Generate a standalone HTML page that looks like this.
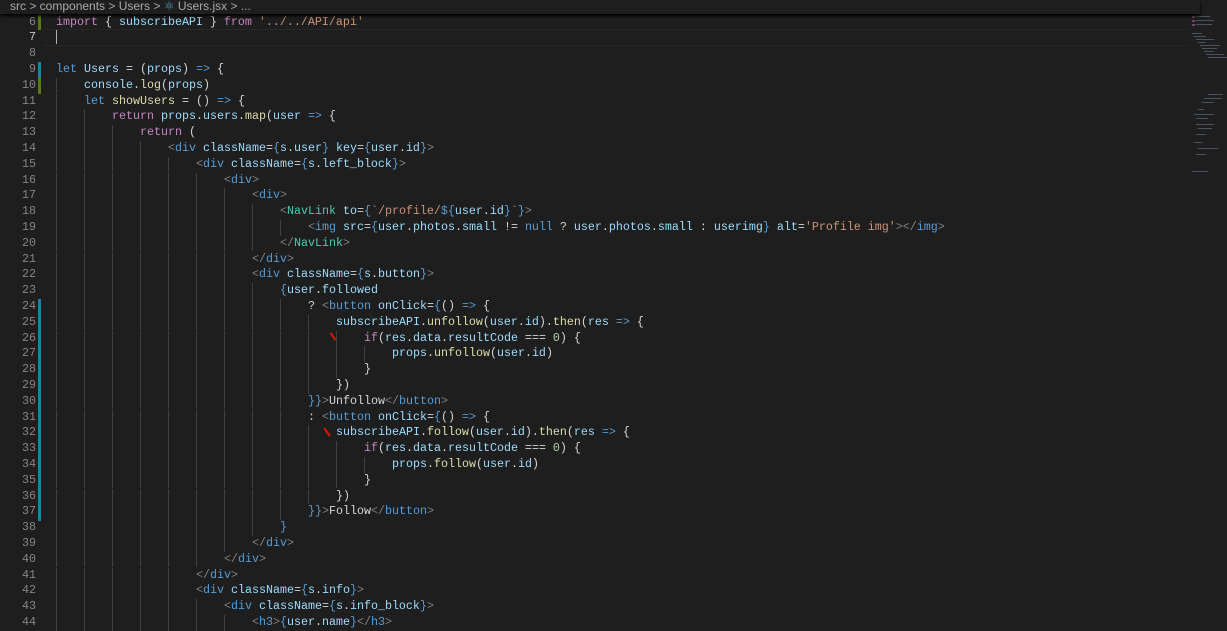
<!DOCTYPE html>
<html><head><meta charset="utf-8"><style>
body{margin:0;background:#1e1e1e;width:1227px;height:627px;overflow:hidden;position:relative;font-family:"Liberation Mono",monospace;}
.bc{position:absolute;left:0;top:0;width:1190px;height:14px;background:#1e1e1e;color:#a9a9a9;font:12px "Liberation Sans",sans-serif;line-height:13px;padding-left:10px;z-index:3;box-shadow:0 2px 3px #000;white-space:pre}
.ln{position:absolute;left:0;width:36px;text-align:right;color:#858585;font-size:11.67px;line-height:15.8px;height:15.8px;margin-top:2.5px}
.cd{position:absolute;left:56px;font-size:11.67px;line-height:15.8px;height:15.8px;white-space:pre;color:#d4d4d4;margin-top:2.5px}
.ind{display:inline-block;height:15.8px;vertical-align:top;background:repeating-linear-gradient(to right,#404040 0 1px,transparent 1px 28px)}
.bar{position:absolute;left:38px;width:3px}
.k{color:#569cd6}.p{color:#c586c0}.v{color:#9cdcfe}.f{color:#dcdcaa}.t{color:#808080}.s{color:#ce9178}.n{color:#b5cea8}.c{color:#4ec9b0}
</style></head><body>
<div class="bc">src &gt; components &gt; Users &gt; <span style="color:#519aba">⚛</span> Users.jsx &gt; ...</div>
<div style="position:absolute;left:44px;top:29px;width:1145px;height:15px;border-top:1px solid #282828;border-bottom:1px solid #282828"></div>
<div style="position:absolute;left:56px;top:30px;width:1px;height:14px;background:#aeafad"></div>
<div class="bar" style="top:14px;height:16px;background:#587c0c"></div>
<div class="bar" style="top:62px;height:16px;background:#1b81a8"></div>
<div class="bar" style="top:78px;height:16px;background:#587c0c"></div>
<div class="bar" style="top:299px;height:222px;background:#1b81a8"></div>
<div style="position:absolute;left:332px;top:332px;width:2px;height:9px;background:#e51400;transform:rotate(-35deg)"></div>
<div style="position:absolute;left:326px;top:427px;width:2px;height:10px;background:#e51400;transform:rotate(-35deg)"></div>

<div class="ln" style="top:12px">6</div><div class="cd" style="top:12px"><span class="p">import</span> { <span class="v">subscribeAPI</span> } <span class="p">from</span> <span class="s">'../../API/api'</span></div>
<div class="ln" style="top:27.8px;color:#c6c6c6">7</div>
<div class="ln" style="top:43.6px">8</div>
<div class="ln" style="top:59.4px">9</div><div class="cd" style="top:59.4px"><span class="k">let</span> <span class="v">Users</span> = (<span class="v">props</span>) <span class="k">=&gt;</span> {</div>
<div class="ln" style="top:75.2px">10</div><div class="cd" style="top:75.2px"><span class="ind" style="width:28px"></span><span class="v">console</span>.<span class="f">log</span>(<span class="v">props</span>)</div>
<div class="ln" style="top:91px">11</div><div class="cd" style="top:91px"><span class="ind" style="width:28px"></span><span class="k">let</span> <span class="f">showUsers</span> = () <span class="k">=&gt;</span> {</div>
<div class="ln" style="top:106.8px">12</div><div class="cd" style="top:106.8px"><span class="ind" style="width:56px"></span><span class="p">return</span> <span class="v">props</span>.<span class="v">users</span>.<span class="f">map</span>(<span class="v">user</span> <span class="k">=&gt;</span> {</div>
<div class="ln" style="top:122.6px">13</div><div class="cd" style="top:122.6px"><span class="ind" style="width:84px"></span><span class="p">return</span> (</div>
<div class="ln" style="top:138.4px">14</div><div class="cd" style="top:138.4px"><span class="ind" style="width:112px"></span><span class="t">&lt;</span><span class="k">div</span> <span class="v">className</span>=<span class="k">{</span><span class="v">s</span>.<span class="v">user</span><span class="k">}</span> <span class="v">key</span>=<span class="k">{</span><span class="v">user</span>.<span class="v">id</span><span class="k">}</span><span class="t">&gt;</span></div>
<div class="ln" style="top:154.2px">15</div><div class="cd" style="top:154.2px"><span class="ind" style="width:140px"></span><span class="t">&lt;</span><span class="k">div</span> <span class="v">className</span>=<span class="k">{</span><span class="v">s</span>.<span class="v">left_block</span><span class="k">}</span><span class="t">&gt;</span></div>
<div class="ln" style="top:170px">16</div><div class="cd" style="top:170px"><span class="ind" style="width:168px"></span><span class="t">&lt;</span><span class="k">div</span><span class="t">&gt;</span></div>
<div class="ln" style="top:185.8px">17</div><div class="cd" style="top:185.8px"><span class="ind" style="width:196px"></span><span class="t">&lt;</span><span class="k">div</span><span class="t">&gt;</span></div>
<div class="ln" style="top:201.6px">18</div><div class="cd" style="top:201.6px"><span class="ind" style="width:224px"></span><span class="t">&lt;</span><span class="c">NavLink</span> <span class="v">to</span>=<span class="k">{</span><span class="s">`/profile/</span><span class="k">${</span><span class="v">user</span>.<span class="v">id</span><span class="k">}</span><span class="s">`</span><span class="k">}</span><span class="t">&gt;</span></div>
<div class="ln" style="top:217.4px">19</div><div class="cd" style="top:217.4px"><span class="ind" style="width:252px"></span><span class="t">&lt;</span><span class="k">img</span> <span class="v">src</span>=<span class="k">{</span><span class="v">user</span>.<span class="v">photos</span>.<span class="v">small</span> != <span class="k">null</span> ? <span class="v">user</span>.<span class="v">photos</span>.<span class="v">small</span> : <span class="v">userimg</span><span class="k">}</span> <span class="v">alt</span>=<span class="s">'Profile img'</span><span class="t">&gt;&lt;/</span><span class="k">img</span><span class="t">&gt;</span></div>
<div class="ln" style="top:233.2px">20</div><div class="cd" style="top:233.2px"><span class="ind" style="width:224px"></span><span class="t">&lt;/</span><span class="c">NavLink</span><span class="t">&gt;</span></div>
<div class="ln" style="top:249px">21</div><div class="cd" style="top:249px"><span class="ind" style="width:196px"></span><span class="t">&lt;/</span><span class="k">div</span><span class="t">&gt;</span></div>
<div class="ln" style="top:264.8px">22</div><div class="cd" style="top:264.8px"><span class="ind" style="width:196px"></span><span class="t">&lt;</span><span class="k">div</span> <span class="v">className</span>=<span class="k">{</span><span class="v">s</span>.<span class="v">button</span><span class="k">}</span><span class="t">&gt;</span></div>
<div class="ln" style="top:280.6px">23</div><div class="cd" style="top:280.6px"><span class="ind" style="width:224px"></span><span class="k">{</span><span class="v">user</span>.<span class="v">followed</span></div>
<div class="ln" style="top:296.4px">24</div><div class="cd" style="top:296.4px"><span class="ind" style="width:252px"></span>? <span class="t">&lt;</span><span class="k">button</span> <span class="v">onClick</span>=<span class="k">{</span>() <span class="k">=&gt;</span> {</div>
<div class="ln" style="top:312.2px">25</div><div class="cd" style="top:312.2px"><span class="ind" style="width:280px"></span><span class="v">subscribeAPI</span>.<span class="f">unfollow</span>(<span class="v">user</span>.<span class="v">id</span>).<span class="f">then</span>(<span class="v">res</span> <span class="k">=&gt;</span> {</div>
<div class="ln" style="top:328px">26</div><div class="cd" style="top:328px"><span class="ind" style="width:308px"></span><span class="p">if</span>(<span class="v">res</span>.<span class="v">data</span>.<span class="v">resultCode</span> === <span class="n">0</span>) {</div>
<div class="ln" style="top:343.8px">27</div><div class="cd" style="top:343.8px"><span class="ind" style="width:336px"></span><span class="v">props</span>.<span class="f">unfollow</span>(<span class="v">user</span>.<span class="v">id</span>)</div>
<div class="ln" style="top:359.6px">28</div><div class="cd" style="top:359.6px"><span class="ind" style="width:308px"></span>}</div>
<div class="ln" style="top:375.4px">29</div><div class="cd" style="top:375.4px"><span class="ind" style="width:280px"></span>})</div>
<div class="ln" style="top:391.2px">30</div><div class="cd" style="top:391.2px"><span class="ind" style="width:252px"></span><span class="k">}}</span><span class="t">&gt;</span>Unfollow<span class="t">&lt;/</span><span class="k">button</span><span class="t">&gt;</span></div>
<div class="ln" style="top:407px">31</div><div class="cd" style="top:407px"><span class="ind" style="width:252px"></span>: <span class="t">&lt;</span><span class="k">button</span> <span class="v">onClick</span>=<span class="k">{</span>() <span class="k">=&gt;</span> {</div>
<div class="ln" style="top:422.8px">32</div><div class="cd" style="top:422.8px"><span class="ind" style="width:280px"></span><span class="v">subscribeAPI</span>.<span class="f">follow</span>(<span class="v">user</span>.<span class="v">id</span>).<span class="f">then</span>(<span class="v">res</span> <span class="k">=&gt;</span> {</div>
<div class="ln" style="top:438.6px">33</div><div class="cd" style="top:438.6px"><span class="ind" style="width:308px"></span><span class="p">if</span>(<span class="v">res</span>.<span class="v">data</span>.<span class="v">resultCode</span> === <span class="n">0</span>) {</div>
<div class="ln" style="top:454.4px">34</div><div class="cd" style="top:454.4px"><span class="ind" style="width:336px"></span><span class="v">props</span>.<span class="f">follow</span>(<span class="v">user</span>.<span class="v">id</span>)</div>
<div class="ln" style="top:470.2px">35</div><div class="cd" style="top:470.2px"><span class="ind" style="width:308px"></span>}</div>
<div class="ln" style="top:486px">36</div><div class="cd" style="top:486px"><span class="ind" style="width:280px"></span>})</div>
<div class="ln" style="top:501.8px">37</div><div class="cd" style="top:501.8px"><span class="ind" style="width:252px"></span><span class="k">}}</span><span class="t">&gt;</span>Follow<span class="t">&lt;/</span><span class="k">button</span><span class="t">&gt;</span></div>
<div class="ln" style="top:517.6px">38</div><div class="cd" style="top:517.6px"><span class="ind" style="width:224px"></span><span class="k">}</span></div>
<div class="ln" style="top:533.4px">39</div><div class="cd" style="top:533.4px"><span class="ind" style="width:196px"></span><span class="t">&lt;/</span><span class="k">div</span><span class="t">&gt;</span></div>
<div class="ln" style="top:549.2px">40</div><div class="cd" style="top:549.2px"><span class="ind" style="width:168px"></span><span class="t">&lt;/</span><span class="k">div</span><span class="t">&gt;</span></div>
<div class="ln" style="top:565px">41</div><div class="cd" style="top:565px"><span class="ind" style="width:140px"></span><span class="t">&lt;/</span><span class="k">div</span><span class="t">&gt;</span></div>
<div class="ln" style="top:580.8px">42</div><div class="cd" style="top:580.8px"><span class="ind" style="width:140px"></span><span class="t">&lt;</span><span class="k">div</span> <span class="v">className</span>=<span class="k">{</span><span class="v">s</span>.<span class="v">info</span><span class="k">}</span><span class="t">&gt;</span></div>
<div class="ln" style="top:596.6px">43</div><div class="cd" style="top:596.6px"><span class="ind" style="width:168px"></span><span class="t">&lt;</span><span class="k">div</span> <span class="v">className</span>=<span class="k">{</span><span class="v">s</span>.<span class="v">info_block</span><span class="k">}</span><span class="t">&gt;</span></div>
<div class="ln" style="top:612.4px">44</div><div class="cd" style="top:612.4px"><span class="ind" style="width:196px"></span><span class="t">&lt;</span><span class="k">h3</span><span class="t">&gt;</span><span class="k">{</span><span class="v">user</span>.<span class="v">name</span><span class="k">}</span><span class="t">&lt;/</span><span class="k">h3</span><span class="t">&gt;</span></div>

<svg style="position:absolute;left:1190px;top:14px" width="37" height="170">
<g fill="#5a6a7a" opacity=".7">
<rect x="2" y="2" width="3" height="2" fill="#8a5a8a"/><rect x="6" y="2" width="14" height="1"/>
<rect x="2" y="6" width="3" height="2" fill="#8a5a8a"/><rect x="6" y="6" width="18" height="1"/>
<rect x="2" y="10" width="3" height="2" fill="#8a5a8a"/><rect x="6" y="10" width="16" height="1"/>
<rect x="2" y="19" width="10" height="1"/><rect x="4" y="22" width="12" height="1"/><rect x="6" y="25" width="18" height="1"/>
<rect x="8" y="28" width="8" height="1"/><rect x="10" y="31" width="20" height="1"/><rect x="12" y="34" width="15" height="1"/>
<rect x="14" y="37" width="10" height="1"/><rect x="16" y="40" width="18" height="1"/><rect x="18" y="43" width="19" height="1"/>
<rect x="18" y="80" width="15" height="1"/><rect x="14" y="84" width="18" height="1"/><rect x="12" y="88" width="12" height="1"/>
<rect x="8" y="95" width="6" height="1"/><rect x="4" y="100" width="20" height="1"/><rect x="6" y="104" width="12" height="1"/>
<rect x="6" y="110" width="18" height="1"/><rect x="8" y="114" width="14" height="1"/><rect x="6" y="120" width="10" height="1"/>
<rect x="4" y="128" width="8" height="1"/><rect x="8" y="134" width="20" height="1"/><rect x="6" y="140" width="10" height="1"/>
<rect x="2" y="157" width="16" height="1"/>
</g></svg>
</body></html>
